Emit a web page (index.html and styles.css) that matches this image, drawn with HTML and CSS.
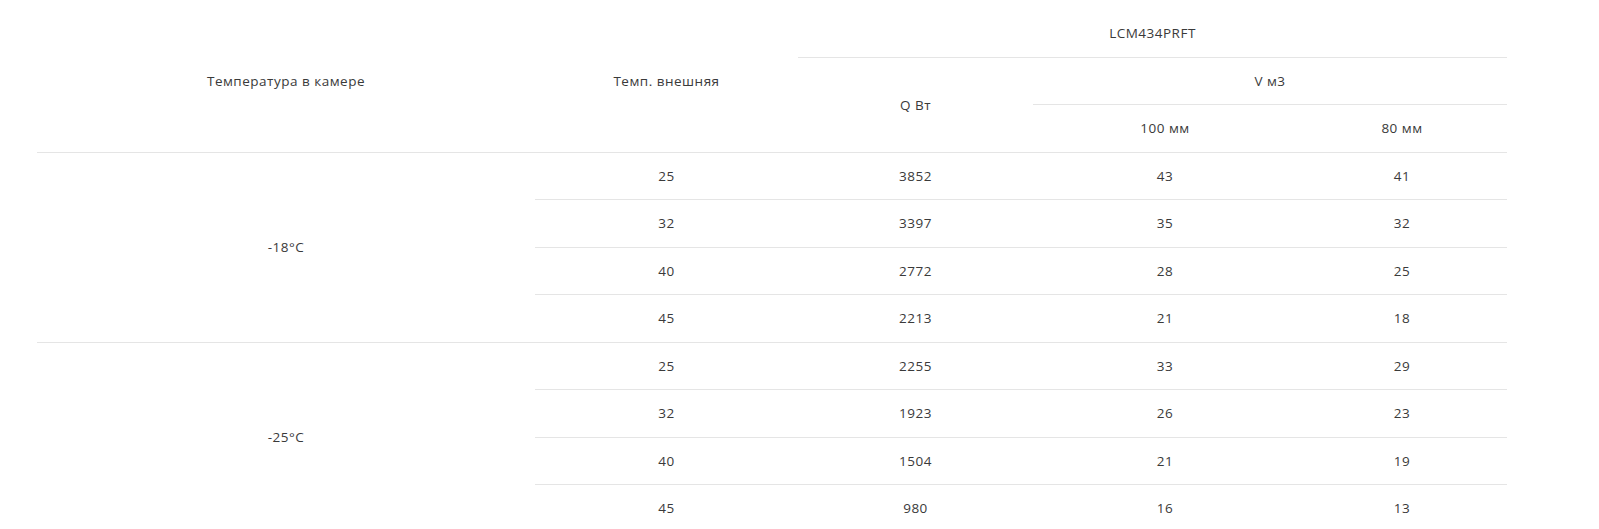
FILE: index.html
```html
<!DOCTYPE html>
<html lang="ru">
<head>
<meta charset="utf-8">
<title>LCM434PRFT</title>
<link rel="stylesheet" href="styles.css">
</head>
<body>
<div class="wrap">
<table class="spec">
<colgroup>
<col class="c1"><col class="c2"><col class="c3"><col class="c4"><col class="c5">
</colgroup>
<thead>
<tr class="h1">
<th rowspan="3" class="bb">Температура в камере</th>
<th rowspan="3" class="bb">Темп. внешняя</th>
<th colspan="3" class="bb">LCM434PRFT</th>
</tr>
<tr>
<th rowspan="2" class="bb">Q Вт</th>
<th colspan="2" class="bb">V м3</th>
</tr>
<tr>
<th class="bb">100 мм</th>
<th class="bb">80 мм</th>
</tr>
</thead>
<tbody>
<tr><td rowspan="4">-18°C</td><td>25</td><td>3852</td><td>43</td><td>41</td></tr>
<tr><td>32</td><td>3397</td><td>35</td><td>32</td></tr>
<tr><td>40</td><td>2772</td><td>28</td><td>25</td></tr>
<tr><td>45</td><td>2213</td><td>21</td><td>18</td></tr>
<tr><td rowspan="4">-25°C</td><td>25</td><td>2255</td><td>33</td><td>29</td></tr>
<tr><td>32</td><td>1923</td><td>26</td><td>23</td></tr>
<tr><td>40</td><td>1504</td><td>21</td><td>19</td></tr>
<tr><td>45</td><td>980</td><td>16</td><td>13</td></tr>
</tbody>
</table>
</div>
</body>
</html>
```
FILE: styles.css
```css
html, body {
  margin: 0;
  padding: 0;
  background: #ffffff;
}
.wrap {
  padding: 10px 92px 0 37px;
}
.spec {
  width: 1470px;
  table-layout: fixed;
  border-collapse: separate;
  border-spacing: 0;
  font-family: "Open Sans", "Liberation Sans", sans-serif;
  font-size: 13.5px;
  letter-spacing: 0.5px;
  color: #3a3a3a;
}
.c1 { width: 498px; }
.c2 { width: 263px; }
.c3 { width: 235px; }
.c4 { width: 264px; }
.c5 { width: 210px; }
.spec tr {
  height: 47.5px;
}
.spec th,
.spec td {
  padding: 0 8px;
  text-align: center;
  vertical-align: middle;
  font-weight: 400;
  line-height: 18px;
}
.spec th.bb,
.spec td {
  border-bottom: 1px solid #e5e5e5;
}
```
